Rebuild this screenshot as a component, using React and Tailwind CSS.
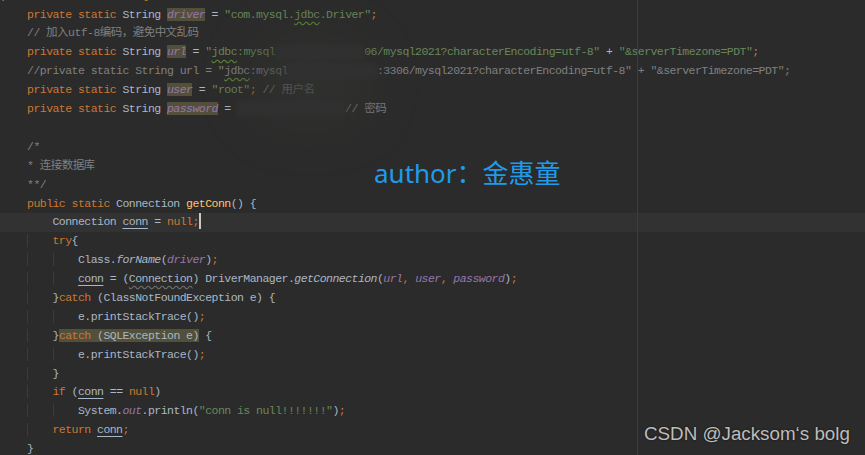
import React from 'react';

// token type -> classes
const tone = {
  k: 'text-[#cc7832]',
  s: 'text-[#6a8759]',
  sw: 'text-[#6a8759] underline decoration-wavy decoration-[#5e8a3a] underline-offset-[3px]',
  c: 'text-[#808080]',
  cw: 'text-[#808080] underline decoration-wavy decoration-[#5e8a3a] underline-offset-[3px]',
  f: 'text-[#9876aa] italic',
  fh: 'text-[#9876aa] italic bg-[#52503a]',
  t: 'text-[#a9b7c6]',
  tu: 'text-[#a9b7c6] underline decoration-[#a9b7c6] underline-offset-[3px]',
  tw: 'text-[#a9b7c6] underline decoration-wavy decoration-[#707070] underline-offset-[3px]',
  i: 'text-[#a9b7c6] italic',
  m: 'text-[#ffc66d]',
  // indent guide: four spaces with a thin line on the left
  g: 'shadow-[inset_1px_0_0_#3b3b3b]',
};

const CH = 6.36;
const blur = (n) => ['blur', n];
const IN = ['t', '    '];
const G = ['g', '    '];

const lines = [
  [['k', 'public class JdbcUtil {']],
  [IN, ['k', 'private static '], ['t', 'String '], ['fh', 'driver'], ['t', ' = '], ['s', '"com.mysql.'], ['sw', 'jdbc'], ['s', '.Driver"'], ['k', ';']],
  [['c', '    // 加入utf-8编码，避免中文乱码']],
  [IN, ['k', 'private static '], ['t', 'String '], ['fh', 'url'], ['t', ' = '], ['s', '"'], ['sw', 'jdbc'], ['s', ':mysql'], blur(14), ['s', '06/mysql2021?characterEncoding=utf-8"'], ['t', ' + '], ['s', '"&serverTimezone=PDT"'], ['k', ';']],
  [['c', '    //private static String url = "'], ['cw', 'jdbc'], ['c', ':mysql'], blur(14), ['c', ':3306/mysql2021?characterEncoding=utf-8" + "&serverTimezone=PDT";']],
  [IN, ['k', 'private static '], ['t', 'String '], ['fh', 'user'], ['t', ' = '], ['s', '"root"'], ['k', ';'], ['c', ' // 用户名']],
  [IN, ['k', 'private static '], ['t', 'String '], ['fh', 'password'], ['t', ' = '], blur(17), ['c', '// 密码']],
  [],
  [['c', '    /*']],
  [['c', '    * 连接数据库']],
  [['c', '    **/']],
  [IN, ['k', 'public static '], ['t', 'Connection '], ['m', 'getConn'], ['t', '() {']],
  [IN, IN, ['t', 'Connection '], ['tu', 'conn'], ['t', ' = '], ['k', 'null;'], ['caret']],
  [IN, G, ['k', 'try'], ['t', '{']],
  [IN, G, G, ['t', 'Class.'], ['i', 'forName'], ['t', '('], ['f', 'driver'], ['t', ')'], ['k', ';']],
  [IN, G, G, ['tu', 'conn'], ['t', ' = ('], ['tw', 'Connection'], ['t', ') DriverManager.'], ['i', 'getConnection'], ['t', '('], ['f', 'url'], ['k', ', '], ['f', 'user'], ['k', ', '], ['f', 'password'], ['t', ')'], ['k', ';']],
  [IN, G, ['t', '}'], ['k', 'catch '], ['t', '(ClassNotFoundException e) {']],
  [IN, G, G, ['t', 'e.printStackTrace()'], ['k', ';']],
  [IN, G, ['t', '}'], ['warn'], ['t', ' {']],
  [IN, G, G, ['t', 'e.printStackTrace()'], ['k', ';']],
  [IN, G, ['t', '}']],
  [IN, G, ['k', 'if '], ['t', '('], ['tu', 'conn'], ['t', ' == '], ['k', 'null'], ['t', ')']],
  [IN, G, G, ['t', 'System.'], ['f', 'out'], ['t', '.println('], ['s', '"conn is null!!!!!!!"'], ['t', ')'], ['k', ';']],
  [IN, G, ['k', 'return '], ['tu', 'conn'], ['k', ';']],
  [IN, ['t', '}']],
];

const Token = ({ tok }) => {
  const [type, val] = tok;
  if (type === 'blur') {
    return (
      <span className="inline-block align-middle h-[16px] bg-[#303030] blur-[2px]" style={{ width: val * CH }} />
    );
  }
  if (type === 'caret') {
    return <span className="inline-block align-middle w-[2px] h-[16px] bg-[#c8c8c8] -mt-[2px]" />;
  }
  if (type === 'warn') {
    return (
      <span className="bg-[#52503a]">
        <span className="text-[#cc7832]">catch </span>
        <span className="text-[#a9b7c6]">(SQLException e)</span>
      </span>
    );
  }
  return <span className={tone[type]}>{val}</span>;
};

export default function App() {
  return (
    <div className="relative w-[865px] h-[455px] overflow-hidden bg-[#2b2b2b]">
      {/* faint smudge left by the mosaic */}
      <div className="absolute left-[250px] top-[40px] w-[120px] h-[85px] rounded-full bg-[#32342f] blur-xl opacity-70" />

      <div className="flex flex-col -mt-[13.3px] font-['Liberation_Mono','Noto_Sans_CJK_SC',monospace] text-[11.5px] tracking-[-0.54px]">
        {lines.map((line, idx) => (
          <div
            key={idx}
            className={`h-[18.9px] leading-[18.9px] whitespace-pre pl-[1.6px] ${idx === 12 ? 'bg-[#323232]' : ''}`}
          >
            {line.map((tok, j) => (
              <Token key={j} tok={tok} />
            ))}
          </div>
        ))}
      </div>

      {/* right margin */}
      <div className="absolute left-[637px] top-0 bottom-0 w-px bg-[#3d3d3d]" />

      {/* watermarks */}
      <div className="absolute left-[374px] top-[155px] text-[26px] leading-[36px] text-[#1e9bea] font-['Noto_Sans','Noto_Sans_CJK_SC',sans-serif] whitespace-nowrap">
        author：金惠童
      </div>
      <div className="absolute left-[644px] top-[421px] text-[18.8px] leading-[26px] text-[#bdbdbd] font-['Liberation_Sans',sans-serif] whitespace-nowrap [text-shadow:0_0_2px_#111]">
        CSDN @Jacksom‘s bolg
      </div>
    </div>
  );
}
